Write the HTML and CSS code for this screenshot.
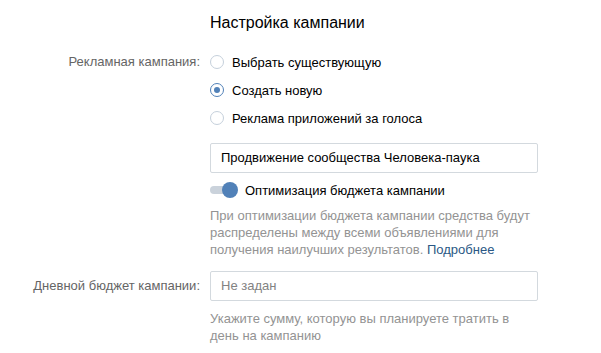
FILE: index.html
```html
<!DOCTYPE html>
<html lang="ru">
<head>
    <meta charset="UTF-8">
    <title>Настройка кампании</title>
    <link rel="stylesheet" href="styles.css">
</head>
<body>
    <div class="form">
        <div class="row">
            <div class="label"></div>
            <h2 class="title">Настройка кампании</h2>
        </div>

        <div class="row">
            <div class="label">Рекламная кампания:</div>
            <div class="field">
                <label class="radio"><span class="circle"></span>Выбрать существующую</label>
                <label class="radio"><span class="circle on"></span>Создать новую</label>
                <label class="radio"><span class="circle"></span>Реклама приложений за голоса</label>

                <div class="input">Продвижение сообщества Человека-паука</div>

                <div class="toggle">
                    <span class="track"><span class="knob"></span></span>
                    Оптимизация бюджета кампании
                </div>
                <p class="hint">При оптимизации бюджета кампании средства будут распределены между всеми объявлениями для получения наилучших результатов. <a href="#">Подробнее</a></p>
            </div>
        </div>

        <div class="row budget">
            <div class="label">Дневной бюджет кампании:</div>
            <div class="field">
                <div class="input empty">Не задан</div>
                <p class="hint">Укажите сумму, которую вы планируете тратить в день на кампанию</p>
            </div>
        </div>
    </div>
</body>
</html>
```

FILE: styles.css
```css
body {
    margin: 0;
    background: #fff;
    font-family: 'Liberation Sans', Arial, sans-serif;
    font-size: 13px;
    color: #000;
}

.form {
    padding-top: 12px;
}

.row {
    display: grid;
    grid-template-columns: 200px 328px;
    column-gap: 10px;
}

.title {
    margin: 0 0 14px;
    font-size: 16px;
    font-weight: normal;
    line-height: 22px;
}

.label {
    text-align: right;
    color: #656565;
    line-height: 16px;
    padding-top: 6px;
}

.radio {
    display: flex;
    align-items: center;
    height: 28px;
}

.circle {
    width: 12px;
    height: 12px;
    border: 1px solid #c5d0db;
    border-radius: 50%;
    margin-right: 8px;
    position: relative;
}

.circle.on {
    border-color: #5181b8;
}

.circle.on::after {
    content: "";
    position: absolute;
    left: 3px;
    top: 3px;
    width: 6px;
    height: 6px;
    border-radius: 50%;
    background: #5181b8;
}

.input {
    box-sizing: border-box;
    height: 30px;
    border: 1px solid #d3d9de;
    border-radius: 2px;
    padding: 0 10px;
    line-height: 28px;
    margin-top: 11px;
}

.input.empty {
    color: #828282;
    margin-top: 0;
}

.toggle {
    display: flex;
    align-items: center;
    height: 18px;
    margin-top: 8px;
}

.track {
    width: 22px;
    height: 8px;
    border-radius: 4px;
    background: #cad2db;
    margin-right: 13px;
    position: relative;
}

.knob {
    position: absolute;
    right: -6px;
    top: -4px;
    width: 16px;
    height: 16px;
    border-radius: 50%;
    background: #5181b8;
}

.hint {
    margin: 8px 0 0;
    color: #939393;
    line-height: 17px;
}

.hint a {
    color: #2a5885;
    text-decoration: none;
}

.budget {
    margin-top: 13px;
}

.budget .label {
    padding-top: 7px;
}

.budget .hint {
    margin-top: 9px;
}
```
